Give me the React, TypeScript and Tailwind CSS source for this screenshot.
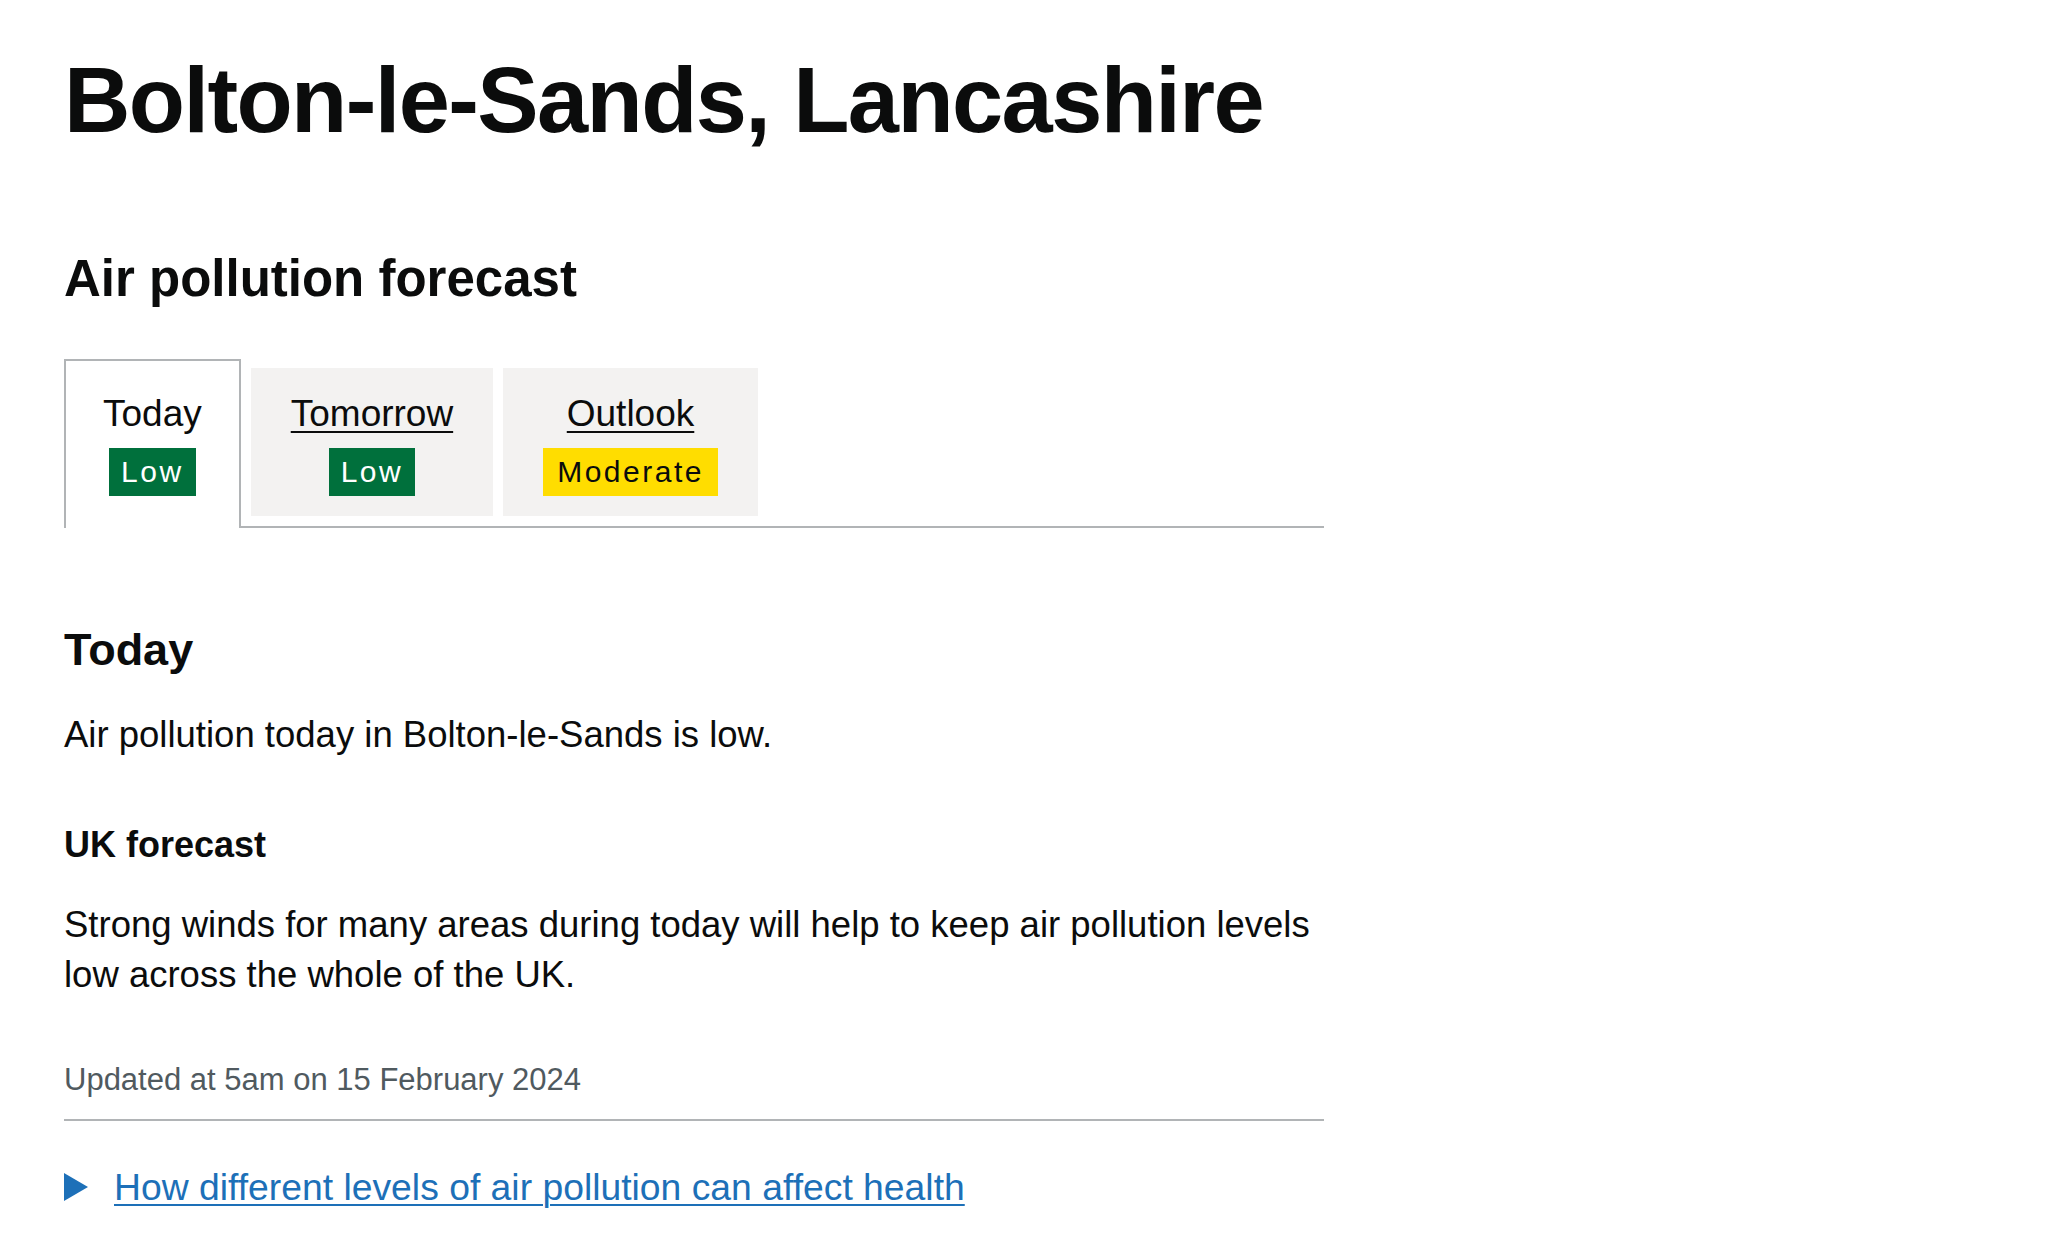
type Level = "Low" | "Moderate";

interface Tab {
  label: string;
  level: Level;
  selected?: boolean;
}

const tabs: Tab[] = [
  { label: "Today", level: "Low", selected: true },
  { label: "Tomorrow", level: "Low" },
  { label: "Outlook", level: "Moderate" },
];

function Badge({ level }: { level: Level }) {
  const colour =
    level === "Low"
      ? "bg-[#00703c] text-white px-[12px]"
      : "bg-[#ffdd00] text-[#0b0c0c] px-[14px]";
  return (
    <span
      className={`mt-[9px] inline-block h-[48px] text-[30px] leading-[48px] tracking-[2.5px] ${colour}`}
    >
      {level}
    </span>
  );
}

function Tabs() {
  return (
    <ul className="mt-[52px] flex items-start border-b-2 border-[#b1b4b6]">
      {tabs.map((tab) =>
        tab.selected ? (
          <li
            key={tab.label}
            className="relative mr-[10px] -mb-[2px] flex flex-col items-center border-2 border-b-0 border-[#b1b4b6] bg-white px-[37px] pt-[28px] pb-[32px]"
          >
            <span className="text-[37px] leading-[50px]">{tab.label}</span>
            <Badge level={tab.level} />
          </li>
        ) : (
          <li
            key={tab.label}
            className="mt-[9px] mr-[10px] mb-[10px] flex flex-col items-center bg-[#f3f2f1] px-[40px] pt-[21px] pb-[20px]"
          >
            <a
              href="#"
              className="text-[37px] leading-[50px] text-[#0b0c0c] underline decoration-2 underline-offset-[5px]"
            >
              {tab.label}
            </a>
            <Badge level={tab.level} />
          </li>
        )
      )}
    </ul>
  );
}

export default function App() {
  return (
    <div
      className="min-h-screen bg-white text-[#0b0c0c]"
      style={{ fontFamily: '"Liberation Sans", Arial, sans-serif' }}
    >
      <main className="w-[1260px] ml-[64px] pt-[50px]">
        <h1 className="text-[92px] font-bold leading-[100px] tracking-[-1.6px]">
          Bolton-le-Sands, Lancashire
        </h1>

        <h2 className="mt-[101px] text-[51px] font-bold leading-[56px]">
          Air pollution forecast
        </h2>

        <Tabs />

        <section className="pt-[97px]">
          <h2 className="text-[45px] font-bold leading-[50px]">Today</h2>
          <p className="mt-[35px] text-[36.5px] leading-[50px]">
            Air pollution today in Bolton-le-Sands is low.
          </p>

          <h3 className="mt-[60px] text-[36px] font-bold leading-[50px]">UK forecast</h3>
          <p className="mt-[30px] text-[36.5px] leading-[50px]">
            Strong winds for many areas during today will help to keep air pollution levels
            low across the whole of the UK.
          </p>

          <p className="mt-[60px] text-[31px] leading-[40px] text-[#505a5f]">
            Updated at 5am on 15 February 2024
          </p>
        </section>

        <hr className="mt-[19px] border-0 border-t-2 border-[#b1b4b6]" />

        <details className="mt-[41px]">
          <summary className="flex cursor-pointer list-none items-center text-[#1d70b8] [&::-webkit-details-marker]:hidden">
            <svg width="24" height="28" viewBox="0 0 24 28" className="mr-[26px] shrink-0">
              <polygon points="0,0 24,14 0,28" fill="#1d70b8" />
            </svg>
            <span className="text-[37.3px] leading-[50px] underline decoration-2 underline-offset-[4px]">
              How different levels of air pollution can affect health
            </span>
          </summary>
        </details>
      </main>
    </div>
  );
}
